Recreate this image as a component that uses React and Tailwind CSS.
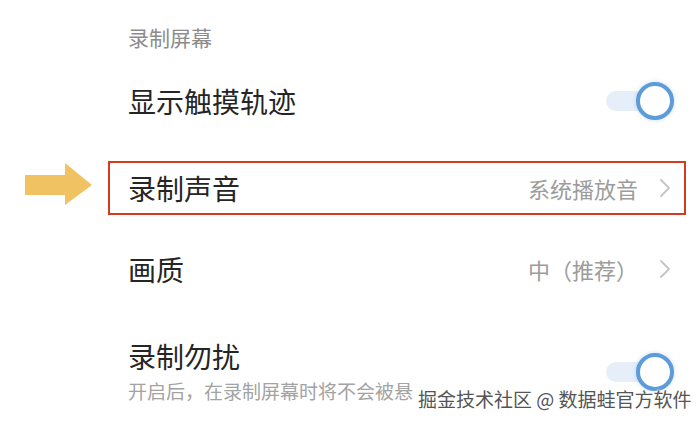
import React from 'react';

const Chevron = () => (
  <svg width="14" height="22" viewBox="0 0 14 22" className="ml-[20px]">
    <path d="M3 3 L11 11 L3 19" fill="none" stroke="#c4c4c4" strokeWidth="1.8" strokeLinecap="round" strokeLinejoin="round" />
  </svg>
);

const Toggle = () => (
  <div className="relative w-[70px] h-[40px] flex items-center">
    <div className="ml-[2px] w-[50px] h-[20px] rounded-full bg-[#e6eff9]" />
    <div className="absolute right-0 top-[1px] w-[38px] h-[38px] rounded-full border-[4px] border-[#5d9bd9] bg-white shadow-[0_0_4px_rgba(93,155,217,0.35)]" />
  </div>
);

const Arrow = () => (
  <svg width="70" height="44" viewBox="0 0 70 44" className="absolute left-[24px] top-[163px]">
    <path d="M1 12 L41 12 L41 0 L68 22 L41 42 L41 32 L1 32 Z" fill="#f1c262" />
  </svg>
);

const App = () => {
  return (
    <div
      className="relative w-[700px] h-[423px] bg-white overflow-hidden"
      style={{ fontFamily: '"Noto Sans CJK SC", "Noto Sans", sans-serif' }}
    >
      <Arrow />
      <div className="ml-[108px] w-[578px] flex flex-col">
        <div className="mt-[18px] h-[40px] pl-[20px] flex items-center text-[21px] text-[#8c8c8c]">录制屏幕</div>

        <div className="mt-[16px] h-[54px] pl-[20px] pr-[12px] flex items-center justify-between">
          <span className="text-[28px] text-[#252525]">显示触摸轨迹</span>
          <Toggle />
        </div>

        <div className="mt-[33px] h-[54px] pl-[18px] pr-[12px] flex items-center justify-between border-2 border-[#d63a1e]">
          <span className="text-[28px] text-[#252525]">录制声音</span>
          <div className="flex items-center">
            <span className="text-[22px] text-[#9c9c9c]">系统播放音</span>
            <Chevron />
          </div>
        </div>

        <div className="mt-[27px] h-[54px] pl-[20px] pr-[14px] flex items-center justify-between">
          <span className="text-[28px] text-[#252525]">画质</span>
          <div className="flex items-center">
            <span className="text-[22px] text-[#9c9c9c]">中（推荐）</span>
            <Chevron />
          </div>
        </div>

        <div className="mt-[40px] pl-[20px] flex flex-col">
          <span className="text-[28px] leading-[40px] text-[#252525]">录制勿扰</span>
          <span className="text-[19px] leading-[30px] text-[#a3a3a3] whitespace-nowrap">开启后，在录制屏幕时将不会被悬</span>
        </div>
      </div>

      <div className="absolute right-[26px] top-[352px]">
        <Toggle />
      </div>

      <div className="absolute left-[418px] top-[384px] text-[19px] leading-[30px] text-[#555] whitespace-nowrap [text-shadow:0_0_2px_#fff,0_0_2px_#fff,0_0_3px_#fff]">
        掘金技术社区 @ 数据蛙官方软件
      </div>
    </div>
  );
};

export default App;
